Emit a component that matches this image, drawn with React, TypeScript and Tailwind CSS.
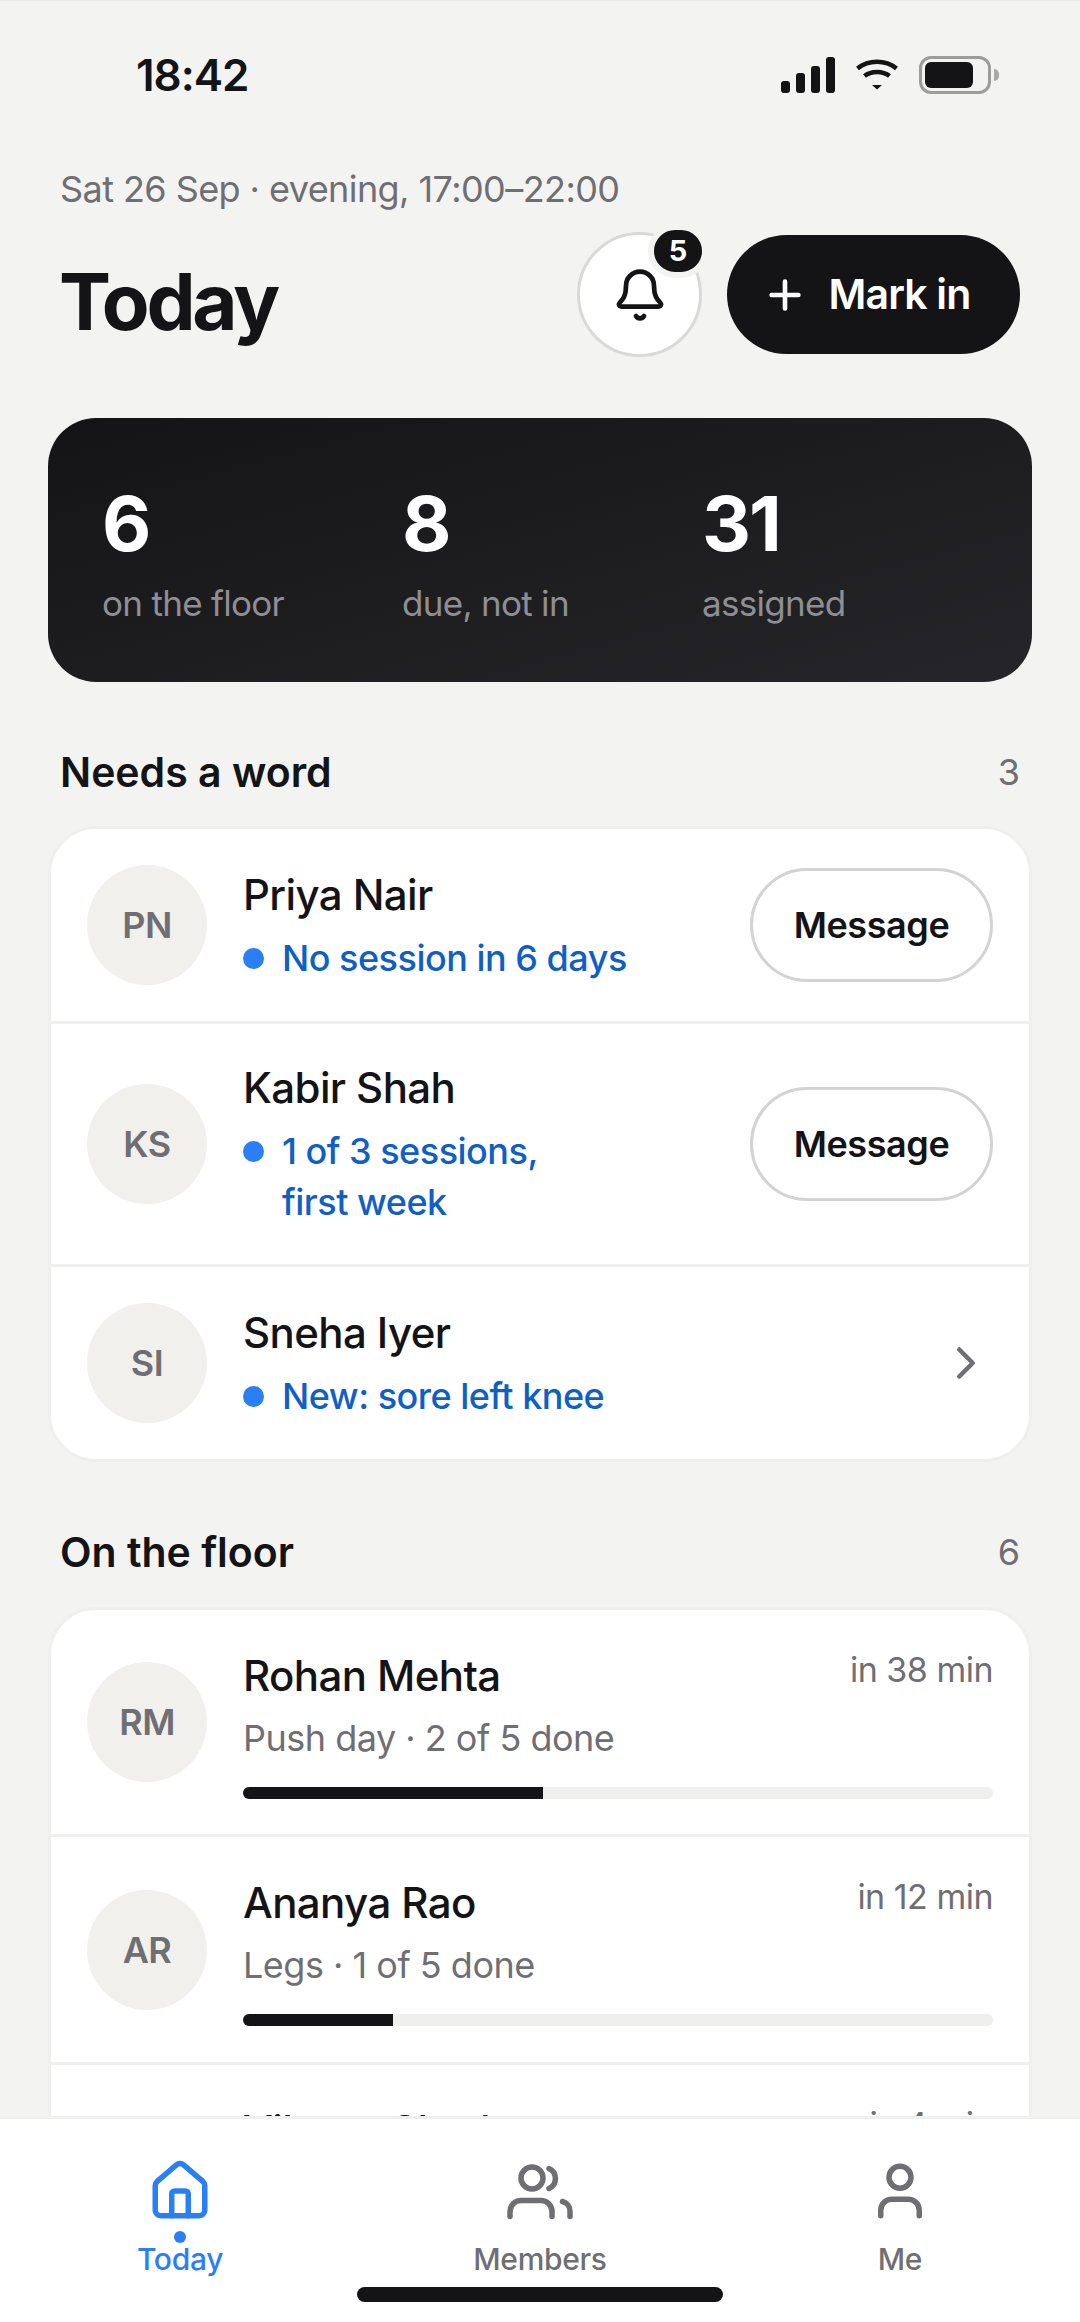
import { Bell, ChevronRight, House, Plus, User } from "lucide-react";

const needsWord = [
  { initials: "PN", name: "Priya Nair", note: ["No session in 6 days"], action: "message" },
  { initials: "KS", name: "Kabir Shah", note: ["1 of 3 sessions,", "first week"], action: "message" },
  { initials: "SI", name: "Sneha Iyer", note: ["New: sore left knee"], action: "chevron" },
];

const onFloor = [
  { initials: "RM", name: "Rohan Mehta", detail: "Push day · 2 of 5 done", time: "in 38 min", progress: 40 },
  { initials: "AR", name: "Ananya Rao", detail: "Legs · 1 of 5 done", time: "in 12 min", progress: 20 },
  { initials: "VS", name: "Vikram Sheth", detail: "Pull day · 1 of 5 done", time: "in 4 min", progress: 20 },
];

const stats = [
  { value: "6", label: "on the floor" },
  { value: "8", label: "due, not in" },
  { value: "31", label: "assigned" },
];

function StatusBar() {
  return (
    <div className="flex h-[147px] shrink-0 items-center justify-between pr-[81px] pl-[136px]">
      <span className="text-[44px] font-semibold tracking-[-1px] text-[#141416]">18:42</span>
      <div className="flex items-center gap-[21px]">
        <svg width="54" height="36" viewBox="0 0 54 36" fill="#141416">
          <rect x="0" y="24" width="9" height="12" rx="3" />
          <rect x="15" y="16" width="9" height="20" rx="3" />
          <rect x="30" y="9" width="9" height="27" rx="3" />
          <rect x="45" y="0" width="9" height="36" rx="3" />
        </svg>
        <svg width="42" height="32" viewBox="0 0 42 32" fill="none" stroke="#141416" strokeWidth="4.5">
          <path d="M1.5 9.5C12.5 0.5 29.5 0.5 40.5 9.5" />
          <path d="M8.5 17C15 11.5 27 11.5 33.5 17" />
          <path d="M16 26l5 4.5 5-4.5z" fill="#141416" stroke="none" />
        </svg>
        <div className="flex items-center gap-[3px]">
          <div className="flex h-[38px] w-[72px] items-center rounded-[12px] border-[3px] border-[#9c9c9c] p-[3px]">
            <div className="h-full w-[48px] rounded-[6px] bg-[#141416]" />
          </div>
          <div className="h-[12px] w-[5px] rounded-r-full bg-[#a8a8a8]" />
        </div>
      </div>
    </div>
  );
}

function SectionHeader({ title, count }: { title: string; count: number }) {
  return (
    <div className="flex items-center justify-between px-[12px]">
      <h2 className="text-[41px] leading-[56px] font-semibold text-[#141416]">{title}</h2>
      <span className="text-[36px] leading-[56px] text-[#6f6f73]">{count}</span>
    </div>
  );
}

function Avatar({ initials }: { initials: string }) {
  return (
    <div className="flex h-[120px] w-[120px] shrink-0 items-center justify-center rounded-full bg-[#f1f0ec] text-[36px] font-semibold tracking-[-0.5px] text-[#6f6f73]">
      {initials}
    </div>
  );
}

function MembersIcon() {
  return (
    <svg width="70" height="60" viewBox="0 0 70 60" fill="none" stroke="currentColor" strokeWidth="5.5" strokeLinecap="round">
      <circle cx="27" cy="17" r="11" />
      <path d="M44 7.500a11 11 0 0 1 0 20" />
      <path d="M5 55.500V50.500A11 11 0 0 1 16 39.500H36A11 11 0 0 1 47 50.500V55.500" />
      <path d="M57.500 40.500A10 10 0 0 1 65 50.500V55.500" />
    </svg>
  );
}

function App() {
  return (
    <div className="flex h-[2322px] w-[1080px] flex-col overflow-hidden border-t border-[#e8e8e6] bg-[#f3f3f1] font-['Inter',sans-serif]">
      <main className="min-h-0 flex-1 overflow-hidden">
        <StatusBar />
        <div className="px-[48px]">
          <div className="px-[12px]">
            <p className="text-[36px] leading-[82px] tracking-[-0.57px] text-[#6f6f73]">Sat 26 Sep · evening, 17:00–22:00</p>
            <div className="mt-[2px] flex items-center justify-between">
              <h1 className="mt-[14px] -ml-[1px] text-[78px] leading-[111px] font-bold tracking-[-3.2px] text-[#141416]">Today</h1>
              <div className="flex items-center gap-[25px]">
                <div className="relative flex h-[125px] w-[125px] items-center justify-center rounded-full border-[3px] border-[#d9d9d7] bg-white">
                  <Bell size={56} strokeWidth={2} className="text-[#141416]" />
                  <span className="absolute -top-[11px] -right-[9px] flex h-[54px] w-[60px] items-center justify-center rounded-full border-[6px] border-[#f3f3f1] bg-[#141416] text-[29px] font-bold text-white">
                    5
                  </span>
                </div>
                <button className="flex h-[119px] w-[293px] items-center justify-center gap-[20px] rounded-full bg-[#141416] pr-[14px] text-[41px] font-semibold tracking-[-0.8px] text-white">
                  <Plus size={46} strokeWidth={2.4} />
                  Mark in
                </button>
              </div>
            </div>
          </div>

          <section className="mt-[61px] flex h-[264px] items-center rounded-[48px] bg-gradient-to-br from-[#141416] to-[#26262a] pt-[8px] pl-[54px]">
            {stats.map((stat) => (
              <div key={stat.label} className="w-[300px] shrink-0">
                <div className="text-[76px] leading-[84px] font-bold tracking-[-2px] text-white">{stat.value}</div>
                <div className="mt-[14px] text-[35px] leading-[48px] tracking-[-0.7px] text-[#8e8e93]">{stat.label}</div>
              </div>
            ))}
          </section>

          <div className="mt-[62px]">
            <SectionHeader title="Needs a word" count={3} />
          </div>
          <section className="mt-[26px] overflow-hidden rounded-[48px] border-[3px] border-[#efefed] bg-white">
            {needsWord.map((row, i) => (
              <div
                key={row.initials}
                className={`flex items-center gap-[36px] px-[36px] py-[36px] ${i > 0 ? "border-t-[3px] border-[#f0f0ee]" : ""}`}
              >
                <Avatar initials={row.initials} />
                <div className="min-w-0 flex-1">
                  <div className="text-[42px] leading-[56px] font-medium tracking-[-0.6px] text-[#141416]">{row.name}</div>
                  <div className="mt-[10px] flex gap-[18px] text-[36px] leading-[51px] font-medium tracking-[-0.5px] text-[#0f5fc4]">
                    <span className="mt-[15px] h-[21px] w-[21px] shrink-0 rounded-full bg-[#2b7ff5]" />
                    <span>
                      {row.note.map((line) => (
                        <span key={line} className="block">
                          {line}
                        </span>
                      ))}
                    </span>
                  </div>
                </div>
                {row.action === "message" ? (
                  <button className="flex h-[114px] w-[243px] items-center justify-center rounded-full border-[3px] border-[#d3d3d1] text-[36px] font-semibold tracking-[-0.4px] text-[#141416]">
                    Message
                  </button>
                ) : (
                  <ChevronRight size={54} strokeWidth={2} className="text-[#6f6f73]" />
                )}
              </div>
            ))}
          </section>

          <div className="mt-[62px]">
            <SectionHeader title="On the floor" count={6} />
          </div>
          <section className="mt-[27px] overflow-hidden rounded-t-[48px] border-[3px] border-[#efefed] bg-white">
            {onFloor.map((row, i) => (
              <div
                key={row.initials}
                className={`flex items-center gap-[36px] px-[36px] ${i > 0 ? "h-[228px] border-t-[3px] border-[#f0f0ee]" : "h-[224px]"}`}
              >
                <Avatar initials={row.initials} />
                <div className="min-w-0 flex-1 pt-[3px]">
                  <div className="flex items-start justify-between">
                    <span className="text-[42px] leading-[54px] font-medium tracking-[-0.6px] text-[#141416]">{row.name}</span>
                    <span className="-mt-[1px] text-[34px] leading-[44px] tracking-[-0.5px] text-[#6f6f73]">{row.time}</span>
                  </div>
                  <div className="mt-[11px] text-[36px] leading-[48px] tracking-[-0.5px] text-[#6f6f73]">{row.detail}</div>
                  <div className="mt-[25px] h-[12px] overflow-hidden rounded-full bg-[#efefed]">
                    <div className="h-full bg-[#141416]" style={{ width: `${row.progress}%` }} />
                  </div>
                </div>
              </div>
            ))}
          </section>
        </div>
      </main>

      <nav className="relative flex h-[206px] shrink-0 border-t-[3px] border-[#efefed] bg-white pt-[39px]">
        <div className="flex flex-1 flex-col items-center text-[#2b7ff5]">
          <House size={66} strokeWidth={2} />
          <span className="mt-[7px] h-[12px] w-[12px] rounded-full bg-[#2b7ff5]" />
          <span className="text-[30px] leading-[32px] font-medium tracking-[-0.3px]">Today</span>
        </div>
        <div className="flex flex-1 flex-col items-center text-[#6f6f73]">
          <div className="flex h-[66px] items-center">
            <MembersIcon />
          </div>
          <span className="mt-[19px] text-[30px] leading-[32px] font-medium tracking-[-0.3px]">Members</span>
        </div>
        <div className="flex flex-1 flex-col items-center text-[#6f6f73]">
          <User size={66} strokeWidth={2} />
          <span className="mt-[19px] text-[30px] leading-[32px] font-medium tracking-[-0.3px]">Me</span>
        </div>
        <div className="absolute bottom-[20px] left-[357px] h-[15px] w-[366px] rounded-full bg-[#141416]" />
      </nav>
    </div>
  );
}

export default App;
